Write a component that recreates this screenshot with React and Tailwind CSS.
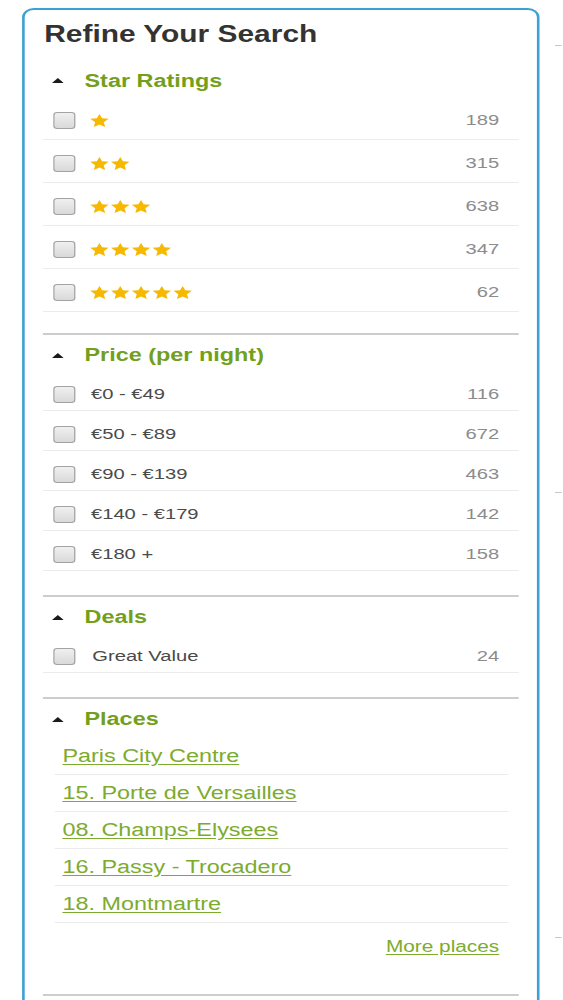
import React from "react";

const Star = () => (
  <svg width="15" height="13" viewBox="0 0 24 22" className="shrink-0">
    <path
      d="M12 0l3.4 7.3 8.6.9-6.4 5.8 1.8 8L12 17.9 4.6 22l1.8-8L0 8.2l8.6-.9z"
      fill="#f6b800"
    />
  </svg>
);

const Arrow = () => (
  <svg width="9" height="5" viewBox="0 0 9 5" className="shrink-0 ml-[7px]">
    <polygon points="4.5,0 9,5 0,5" fill="#1a1a1a" />
  </svg>
);

const Box = () => (
  <span className="ml-[8px] w-[17px] h-[17px] shrink-0 rounded-[3px] border border-[#a3a3a3] bg-linear-to-b from-[#f0f0f0] to-[#d9d9d9]" />
);

const Header = ({ children, first }) => (
  <div className={first ? "flex items-center h-[33px]" : "flex items-center h-[36px] pt-[4px]"}>
    <Arrow />
    <span className="ml-[16px] text-[18px] font-bold text-[#72a01c] leading-none">{children}</span>
  </div>
);

const stars = [
  [1, 189],
  [2, 315],
  [3, 638],
  [4, 347],
  [5, 62],
];

const prices = [
  ["€0 - €49", 116],
  ["€50 - €89", 672],
  ["€90 - €139", 463],
  ["€140 - €179", 142],
  ["€180 +", 158],
];

const places = [
  "Paris City Centre",
  "15. Porte de Versailles",
  "08. Champs-Elysees",
  "16. Passy - Trocadero",
  "18. Montmartre",
];

export default function App() {
  return (
    <div className="w-[563px] h-screen overflow-hidden bg-white">
      <div className="w-[433px] origin-top-left scale-x-[1.3] flex font-['Liberation_Sans',Arial,sans-serif]">
        <div className="ml-[17px] mt-[8px] w-[398px] shrink-0 border-2 border-[#3ca2d4] rounded-[9px] px-[14px] pb-[60px]">
          <div className="h-[54px] pt-[10px] pl-[1px] text-[23px] leading-[28px] font-bold text-[#333333]">
            Refine Your Search
          </div>

          {/* Star ratings */}
          <div className="pb-[21px]">
            <Header first>Star Ratings</Header>
            {stars.map(([n, c]) => (
              <div key={n} className="flex items-center h-[43px] pt-[4px] border-b border-[#ececec]">
                <Box />
                <div className="ml-[11px] flex gap-[1px]">
                  {Array.from({ length: n }).map((_, i) => (
                    <Star key={i} />
                  ))}
                </div>
                <span className="ml-auto mr-[15px] text-[15.5px] text-[#8c8c8c]">{c}</span>
              </div>
            ))}
          </div>

          {/* Price */}
          <div className="border-t-2 border-[#cdcdcd] pb-[24px]">
            <Header>Price (per night)</Header>
            {prices.map(([p, c]) => (
              <div key={p} className="flex items-center h-[40px] pt-[7px] border-b border-[#ececec]">
                <Box />
                <span className="ml-[12px] text-[15.5px] text-[#4a4a4a]">{p}</span>
                <span className="ml-auto mr-[15px] text-[15.5px] text-[#8c8c8c]">{c}</span>
              </div>
            ))}
          </div>

          {/* Deals */}
          <div className="border-t-2 border-[#cdcdcd] pb-[24px]">
            <Header>Deals</Header>
            <div className="flex items-center h-[40px] pt-[7px] border-b border-[#ececec]">
              <Box />
              <span className="ml-[13px] text-[15.5px] text-[#4a4a4a]">Great Value</span>
              <span className="ml-auto mr-[15px] text-[15.5px] text-[#8c8c8c]">24</span>
            </div>
          </div>

          {/* Places */}
          <div className="border-t-2 border-[#cdcdcd] pb-[37px]">
            <Header>Places</Header>
            <div className="mt-[3px] ml-[9px] mr-[8px]">
              {places.map((p) => (
                <div key={p} className="flex items-center h-[37px] border-b border-[#ececec] pl-[6px]">
                  <a href="#" className="text-[18px] leading-none text-[#7dab2e] underline underline-offset-2">
                    {p}
                  </a>
                </div>
              ))}
            </div>
            <div className="flex justify-end mt-[14px] pr-[15px] h-[20px] items-center">
              <a href="#" className="text-[16px] leading-none text-[#7dab2e] underline underline-offset-2">
                More places
              </a>
            </div>
          </div>

          <div className="border-t-2 border-[#cdcdcd] h-[40px]" />
        </div>

        <div className="ml-[12px] w-[5px] flex flex-col">
          <div className="mt-[45px] h-px bg-[#c8c8c8]" />
          <div className="mt-[446px] h-px bg-[#c8c8c8]" />
          <div className="mt-[444px] h-px bg-[#c8c8c8]" />
        </div>
      </div>
    </div>
  );
}
